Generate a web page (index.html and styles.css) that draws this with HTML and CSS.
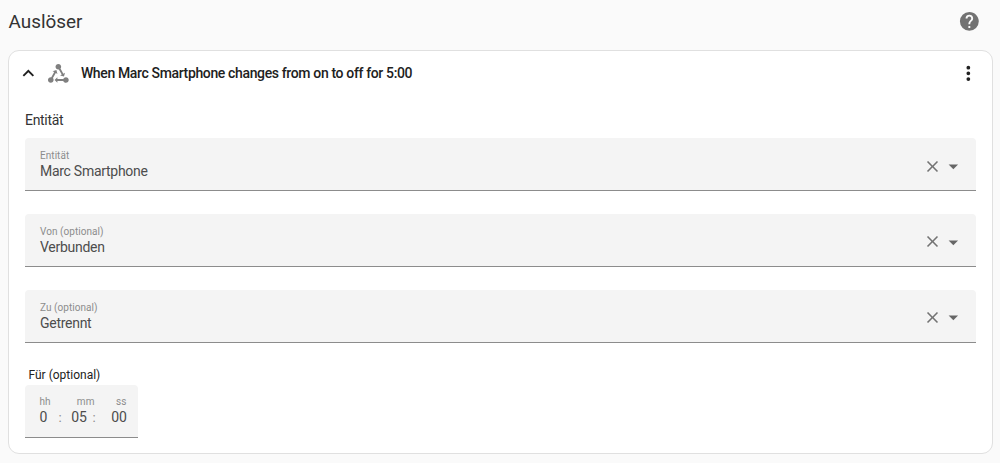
FILE: index.html
```html
<!DOCTYPE html>
<html lang="de">
<head>
    <meta charset="UTF-8">
    <meta name="viewport" content="width=device-width, initial-scale=1.0">
    <title>Auslöser</title>
    <link rel="stylesheet" href="styles.css">
</head>
<body>
    <header class="section-header">
        <h2>Auslöser</h2>
        <svg class="icon help" viewBox="0 0 24 24"><path d="M15.07,11.25L14.17,12.17C13.45,12.89 13,13.5 13,15H11V14.5C11,13.39 11.45,12.39 12.17,11.67L13.41,10.41C13.78,10.05 14,9.55 14,9C14,7.89 13.1,7 12,7A2,2 0 0,0 10,9H8A4,4 0 0,1 12,5A4,4 0 0,1 16,9C16,9.88 15.64,10.67 15.07,11.25M13,19H11V17H13M12,2A10,10 0 0,0 2,12A10,10 0 0,0 12,22A10,10 0 0,0 22,12C22,6.47 17.5,2 12,2Z"/></svg>
    </header>

    <main class="card">
        <div class="card-header">
            <svg class="icon chevron" viewBox="0 0 24 24"><path d="M7.41,15.41L12,10.83L16.59,15.41L18,14L12,8L6,14L7.41,15.41Z"/></svg>
            <svg class="icon state" viewBox="0 0 24 24"><path d="M6.27 17.05C6.72 17.58 7 18.25 7 19C7 20.66 5.66 22 4 22S1 20.66 1 19 2.34 16 4 16C4.18 16 4.36 16 4.53 16.05L7.6 10.69L5.86 9.7L9.95 8.58L11.07 12.67L9.33 11.68L6.27 17.05M20 16C18.7 16 17.6 16.84 17.18 18H11V16L8 19L11 22V20H17.18C17.6 21.16 18.7 22 20 22C21.66 22 23 20.66 23 19S21.66 16 20 16M12 8C12.18 8 12.36 8 12.53 7.95L15.6 13.31L13.86 14.3L17.95 15.42L19.07 11.33L17.33 12.32L14.27 6.95C14.72 6.42 15 5.75 15 5C15 3.34 13.66 2 12 2S9 3.34 9 5 10.34 8 12 8Z"/></svg>
            <h3>When Marc Smartphone changes from on to off for 5:00</h3>
            <svg class="icon menu" viewBox="0 0 24 24"><path d="M12,16A2,2 0 0,1 14,18A2,2 0 0,1 12,20A2,2 0 0,1 10,18A2,2 0 0,1 12,16M12,10A2,2 0 0,1 14,12A2,2 0 0,1 12,14A2,2 0 0,1 10,12A2,2 0 0,1 12,10M12,4A2,2 0 0,1 14,6A2,2 0 0,1 12,8A2,2 0 0,1 10,6A2,2 0 0,1 12,4Z"/></svg>
        </div>

        <div class="card-content">
            <p class="type">Entität</p>

            <div class="field">
                <div class="field-text">
                    <span class="label">Entität</span>
                    <span class="value">Marc Smartphone</span>
                </div>
                <svg class="icon clear" viewBox="0 0 24 24"><path d="M19,6.41L17.59,5L12,10.59L6.41,5L5,6.41L10.59,12L5,17.59L6.41,19L12,13.41L17.59,19L19,17.59L13.41,12L19,6.41Z"/></svg>
                <svg class="icon arrow" viewBox="0 0 24 24"><path d="M7,10L12,15L17,10H7Z"/></svg>
            </div>

            <div class="field">
                <div class="field-text">
                    <span class="label">Von (optional)</span>
                    <span class="value">Verbunden</span>
                </div>
                <svg class="icon clear" viewBox="0 0 24 24"><path d="M19,6.41L17.59,5L12,10.59L6.41,5L5,6.41L10.59,12L5,17.59L6.41,19L12,13.41L17.59,19L19,17.59L13.41,12L19,6.41Z"/></svg>
                <svg class="icon arrow" viewBox="0 0 24 24"><path d="M7,10L12,15L17,10H7Z"/></svg>
            </div>

            <div class="field">
                <div class="field-text">
                    <span class="label">Zu (optional)</span>
                    <span class="value">Getrennt</span>
                </div>
                <svg class="icon clear" viewBox="0 0 24 24"><path d="M19,6.41L17.59,5L12,10.59L6.41,5L5,6.41L10.59,12L5,17.59L6.41,19L12,13.41L17.59,19L19,17.59L13.41,12L19,6.41Z"/></svg>
                <svg class="icon arrow" viewBox="0 0 24 24"><path d="M7,10L12,15L17,10H7Z"/></svg>
            </div>

            <p class="duration-label">Für (optional)</p>
            <div class="duration">
                <div class="unit hours">
                    <span class="label">hh</span>
                    <span class="value">0</span>
                </div>
                <span class="colon">:</span>
                <div class="unit minutes">
                    <span class="label">mm</span>
                    <span class="value">05</span>
                </div>
                <span class="colon">:</span>
                <div class="unit seconds">
                    <span class="label">ss</span>
                    <span class="value">00</span>
                </div>
            </div>
        </div>
    </main>
</body>
</html>
```

FILE: styles.css
```css
* {
    margin: 0;
    padding: 0;
    box-sizing: border-box;
}

body {
    height: 463px;
    padding: 0 7.5px 0 8px;
    background: #fafafa;
    color: #212121;
    font-family: Roboto, sans-serif;
    overflow: hidden;
}

.icon {
    width: 22.7px;
    height: 22.7px;
    fill: currentColor;
    flex-shrink: 0;
}

.section-header {
    display: flex;
    align-items: center;
    justify-content: space-between;
    height: 50px;
    padding: 0 12px 7px 0.5px;
}

.section-header h2 {
    font-size: 18.9px;
    font-weight: 400;
    color: #333;
}

.help {
    color: #727272;
}

.card {
    height: 404px;
    background: #fff;
    border: 1px solid #e0e0e0;
    border-radius: 11px;
}

.card-header {
    display: flex;
    align-items: center;
    height: 45px;
    padding: 0 11.5px 0 8px;
}

.state {
    margin-left: 7.5px;
    color: #808080;
}

.card-header h3 {
    flex: 1;
    margin-left: 11px;
    padding-bottom: 1px;
    font-size: 14px;
    font-weight: 500;
    letter-spacing: -0.36px;
}

.card-content {
    padding: 15px 15.5px 0 16px;
}

.type {
    height: 27.2px;
    font-size: 14px;
    line-height: 18px;
    letter-spacing: -0.3px;
    color: #333;
}

.field {
    display: flex;
    align-items: center;
    height: 52.8px;
    margin-bottom: 23px;
    padding: 4px 11px 0 15px;
    background: #f4f4f4;
    border-bottom: 1px solid #8c8c8c;
    border-radius: 4px 4px 0 0;
}

.field-text {
    flex: 1;
    padding-bottom: 2.4px;
}

.label,
.value {
    display: block;
}

.label {
    font-size: 10px;
    line-height: 14px;
    letter-spacing: 0.05px;
    color: #8c8c8c;
}

.value {
    font-size: 14px;
    line-height: 17.5px;
    letter-spacing: -0.28px;
    color: #4d4d4d;
}

.clear {
    width: 19px;
    height: 19px;
    color: #737373;
}

.arrow {
    color: #666;
}

.duration-label {
    padding-left: 3.5px;
    font-size: 12px;
    line-height: 19.5px;
}

.duration {
    display: flex;
    width: 113px;
    height: 52.8px;
    padding: 10px 0 0 14.5px;
    background: #f4f4f4;
    border-bottom: 1px solid #8c8c8c;
    border-radius: 4px 4px 0 0;
}

.unit {
    text-align: right;
}

.hours {
    width: 19px;
    text-align: left;
}

.minutes {
    width: 31px;
}

.minutes .label {
    margin-right: -2px;
}

.minutes .value {
    padding-right: 6px;
}

.seconds {
    width: 31px;
}

.colon {
    width: 3px;
    padding-top: 14px;
    font-size: 13.25px;
    line-height: 18px;
    color: #8c8c8c;
}
```
